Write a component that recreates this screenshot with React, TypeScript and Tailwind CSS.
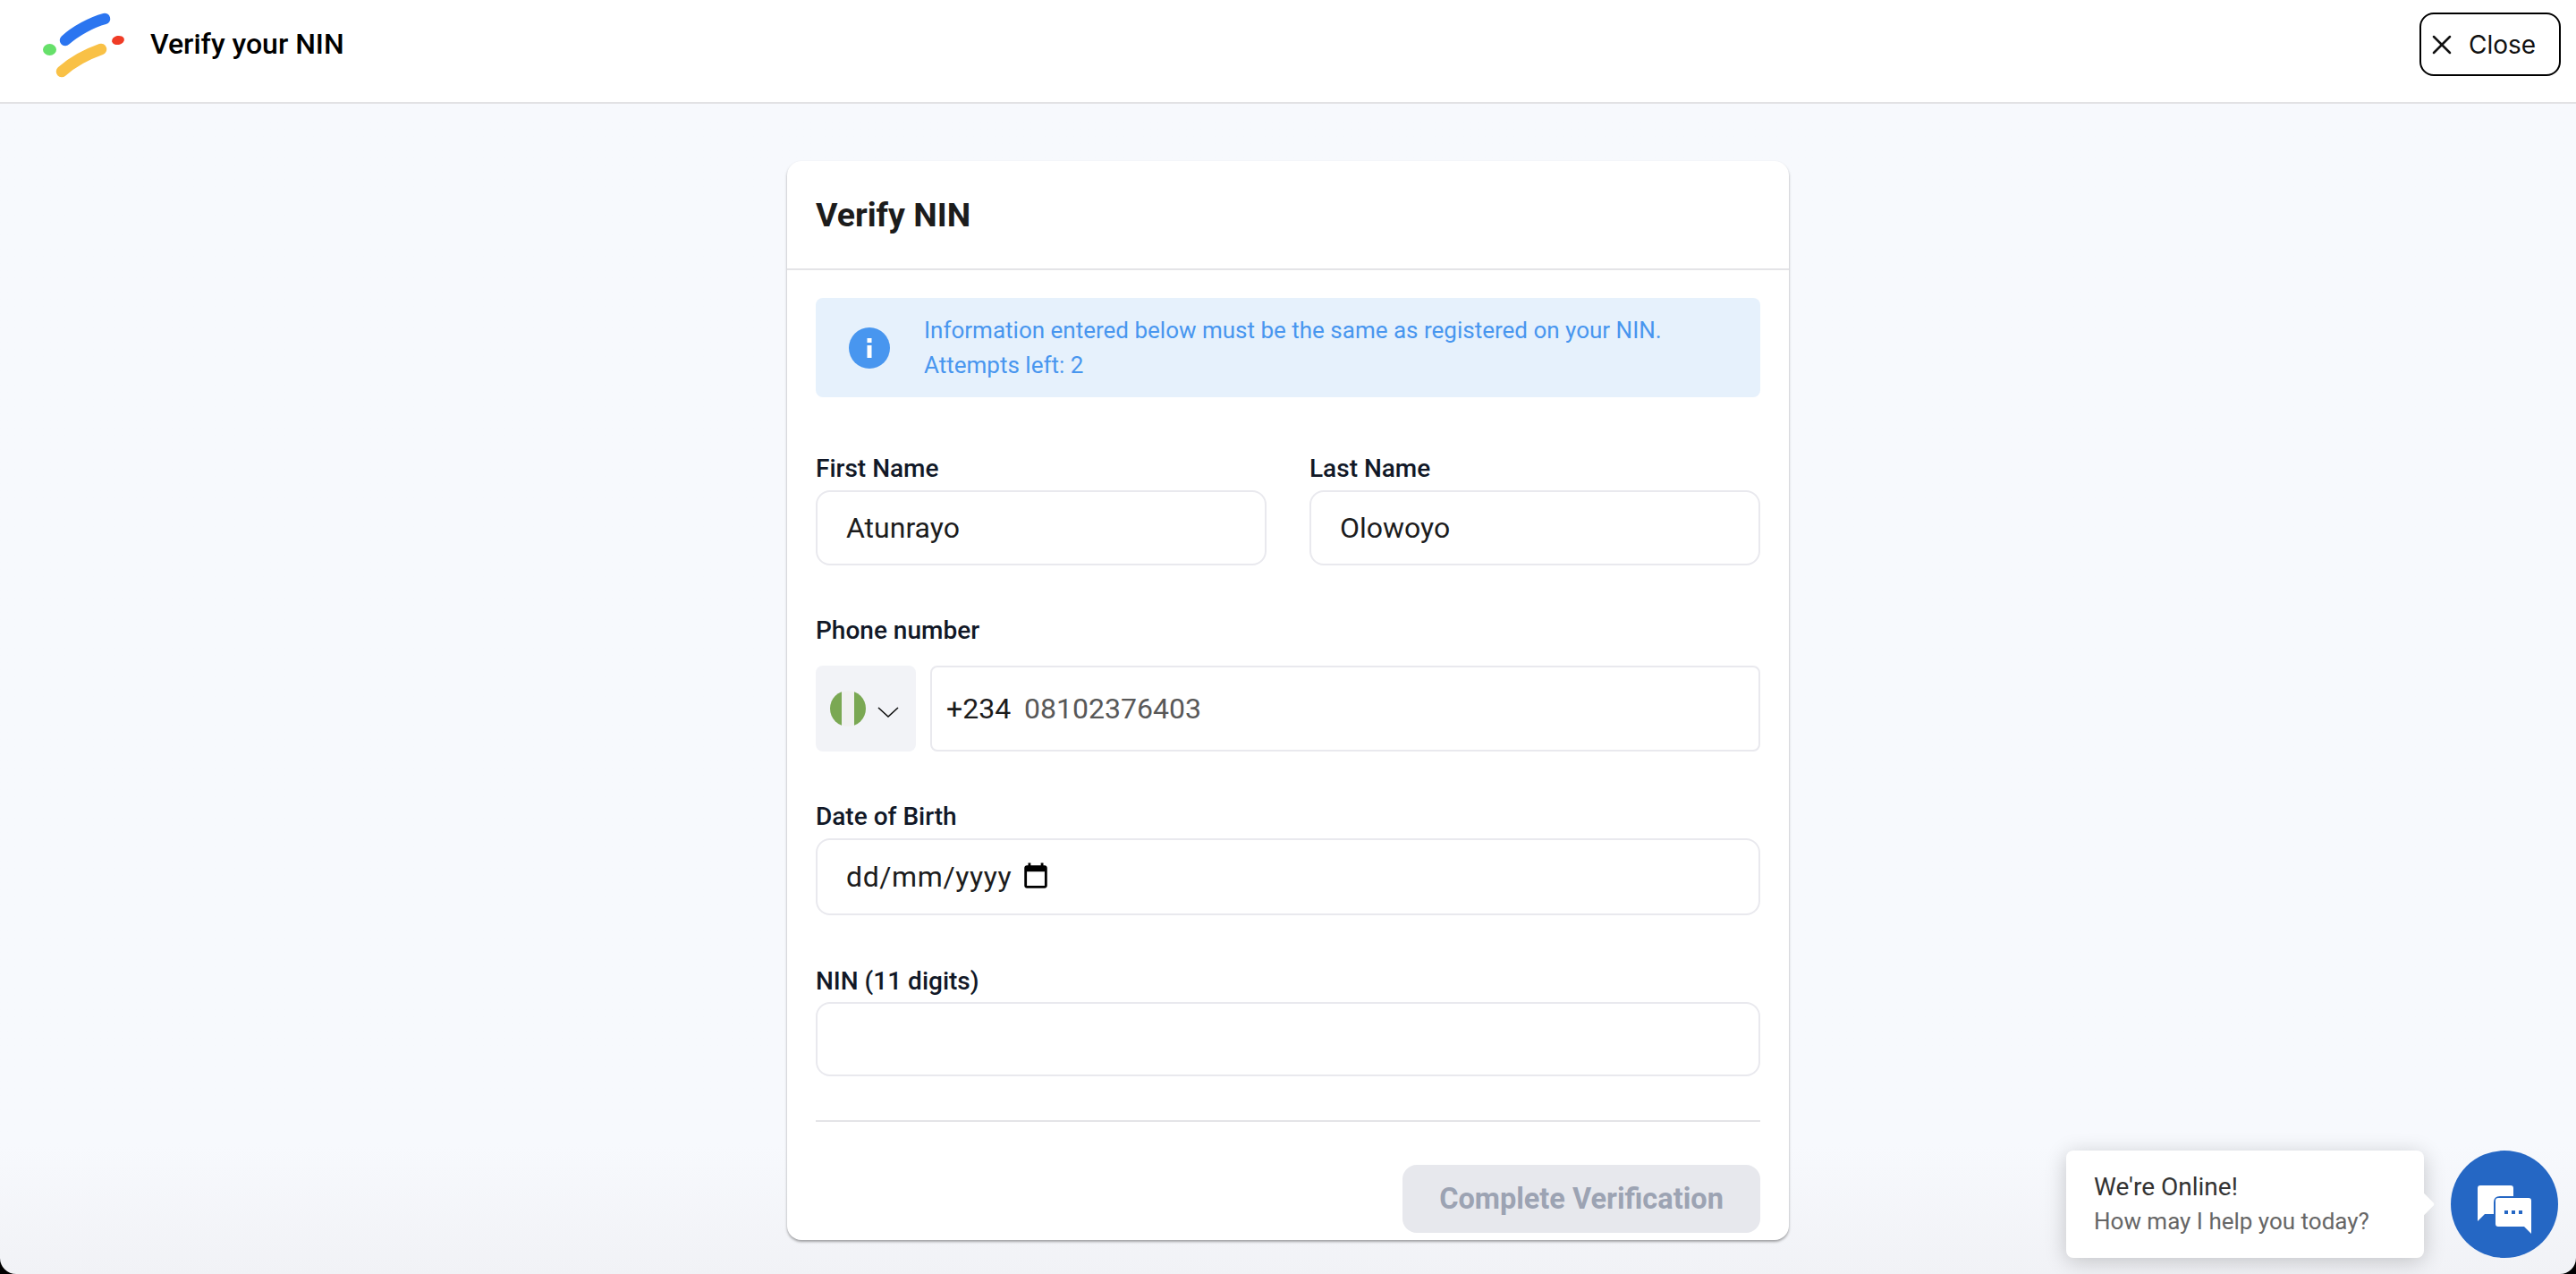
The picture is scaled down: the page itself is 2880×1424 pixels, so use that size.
import { X } from 'lucide-react';

const inputBox = 'w-full rounded-[16px] border-2 border-[#e9e9ee] bg-white px-[32px] text-[32px] text-[#1c1c1c] outline-none';

function Label({ children }: { children: React.ReactNode }) {
  return <label className="block text-[28px] leading-[32px] font-medium text-[#111827]">{children}</label>;
}

function Logo() {
  return (
    <svg width="100" height="76" viewBox="0 0 100 76" className="ml-[46px] shrink-0">
      <path d="M27 34 C38 24 56 14 71 10" stroke="#2b75f0" strokeWidth="12.5" strokeLinecap="round" fill="none" />
      <path d="M23 69 C33 60 50 50 67 44" stroke="#f9c146" strokeWidth="12.5" strokeLinecap="round" fill="none" />
      <ellipse cx="9.5" cy="44.5" rx="7.5" ry="6.5" fill="#66e06a" />
      <ellipse cx="86" cy="34" rx="7" ry="5" fill="#f03c26" transform="rotate(-12 86 34)" />
    </svg>
  );
}

function ChatBubbles() {
  return (
    <svg width="60" height="54" viewBox="0 0 60 54" className="mt-[12px]">
      <path d="M3 0 H37 Q40 0 40 3 V12 H25 Q18 12 18 19 V32 H8 L0 40 V3 Q0 0 3 0 Z" fill="#fff" />
      <path d="M23 14 H57 Q60 14 60 17 V54 L52 46 H23 Q20 46 20 43 V17 Q20 14 23 14 Z" fill="#fff" />
      <rect x="30" y="28" width="4" height="4" fill="#2567c4" />
      <rect x="38" y="28" width="4" height="4" fill="#2567c4" />
      <rect x="46" y="28" width="4" height="4" fill="#2567c4" />
    </svg>
  );
}

export default function App() {
  return (
    <div className="bg-black">
      <div className="relative flex h-[1424px] flex-col overflow-hidden rounded-b-[18px] bg-gradient-to-b from-[#f7f9fd] from-90% to-[#f1f2f6] font-['Roboto',sans-serif]">
        {/* Header */}
        <header className="flex h-[116px] shrink-0 items-center justify-between border-b-2 border-[#e2e2e4] bg-white">
          <div className="mb-[16px] flex items-center">
            <Logo />
            <h1 className="ml-[22px] text-[32px] font-medium text-black">Verify your NIN</h1>
          </div>
          <button className="mr-[17px] mb-[15px] flex h-[71px] w-[158px] items-center rounded-[16px] border-2 border-black bg-white pl-[5px] text-[28px] text-[#111] font-['Inter',sans-serif]">
            <X className="h-[36px] w-[36px]" strokeWidth={1.7} />
            <span className="ml-[12px]">Close</span>
          </button>
        </header>

        {/* Card */}
        <main className="mx-auto mt-[64px] flex h-[1206px] w-[1120px] flex-col rounded-[16px] bg-white shadow-[0_2px_3px_rgba(0,0,0,0.35)]">
          <div className="flex h-[122px] shrink-0 items-center border-b-2 border-[#e4e4e7] px-[32px]">
            <h2 className="text-[37.5px] font-bold text-[#1c1c1c]">Verify NIN</h2>
          </div>

          <div className="flex flex-1 flex-col px-[32px] pt-[31px]">
            <div className="flex h-[111px] items-center rounded-[8px] bg-[#e6f1fc] pl-[37px]">
              <svg width="46" height="46" viewBox="0 0 46 46" className="shrink-0">
                <circle cx="23" cy="23" r="23" fill="#4896ef" />
                <rect x="20.5" y="12" width="5" height="5" fill="#fff" />
                <rect x="20.5" y="20" width="5" height="14" fill="#fff" />
              </svg>
              <p className="ml-[38px] text-[26px] leading-[39px] text-[#4896ef]">
                Information entered below must be the same as registered on your NIN.<br />Attempts left: 2
              </p>
            </div>

            <div className="mt-[64px] grid grid-cols-2 gap-[48px]">
              <div>
                <Label>First Name</Label>
                <input readOnly value="Atunrayo" className={`${inputBox} mt-[8px] h-[84px]`} />
              </div>
              <div>
                <Label>Last Name</Label>
                <input readOnly value="Olowoyo" className={`${inputBox} mt-[8px] h-[84px]`} />
              </div>
            </div>

            <div className="mt-[57px]">
              <Label>Phone number</Label>
              <div className="mt-[23px] flex gap-[16px]">
                <div className="flex h-[96px] w-[112px] shrink-0 items-center rounded-[8px] bg-[#f2f3f7] pl-[16px]">
                  <div className="flex h-[40px] w-[40px] overflow-hidden rounded-full">
                    <div className="flex-1 bg-[#7aa853]" />
                    <div className="flex-1 bg-[#f0f0f0]" />
                    <div className="flex-1 bg-[#7aa853]" />
                  </div>
                  <svg width="24" height="12" viewBox="0 0 24 12" className="mt-[8px] ml-[13px]" fill="none" stroke="#111" strokeWidth="1.6">
                    <polyline points="1,1 12,11 23,1" />
                  </svg>
                </div>
                <div className="flex h-[96px] flex-1 items-center rounded-[8px] border-2 border-[#e9e9ee] pl-[16px] text-[32px]">
                  <span className="text-[#1c1c1c]">+234</span>
                  <span className="ml-[15px] text-[#585858]">08102376403</span>
                </div>
              </div>
            </div>

            <div className="mt-[57px]">
              <Label>Date of Birth</Label>
              <div className={`${inputBox} mt-[8px] flex h-[86px] items-center`}>
                <span className="tracking-[0.6px]">dd/mm/yyyy</span>
                <svg width="34" height="34" viewBox="0 0 24 24" className="ml-[10px]" fill="#000">
                  <path d="M19 3h-1V1h-2v2H8V1H6v2H5c-1.1 0-2 .9-2 2v14c0 1.1.9 2 2 2h14c1.1 0 2-.9 2-2V5c0-1.1-.9-2-2-2zm0 16H5V8h14v11z" />
                </svg>
              </div>
            </div>

            <div className="mt-[58px]">
              <Label>NIN (11 digits)</Label>
              <input readOnly className={`${inputBox} mt-[7px] h-[83px]`} />
            </div>

            <div className="mt-[49px] border-t-2 border-[#e4e4e7]" />

            <div className="mt-[48px] flex justify-end">
              <button disabled className="h-[76px] w-[400px] rounded-[16px] bg-[#e7e8ed] text-[32.5px] font-bold text-[#9ca3b3]">
                Complete Verification
              </button>
            </div>
          </div>
        </main>

        {/* Chat widget */}
        <div className="absolute top-[1286px] left-[2310px] flex h-[120px] w-[400px] flex-col justify-center rounded-[8px] bg-white pl-[31px] shadow-[0_4px_24px_rgba(0,0,0,0.2)]">
          <span className="text-[28px] leading-[38px] text-[#333]">We're Online!</span>
          <span className="text-[26px] leading-[38px] text-[#666]">How may I help you today?</span>
          <div className="absolute top-[47px] right-[-7px] h-[26px] w-[26px] rotate-45 rounded-[3px] bg-white" />
        </div>
        <button className="absolute top-[1286px] left-[2740px] flex h-[120px] w-[120px] items-center justify-center rounded-full bg-[#2567c4]">
          <ChatBubbles />
        </button>
      </div>
    </div>
  );
}
